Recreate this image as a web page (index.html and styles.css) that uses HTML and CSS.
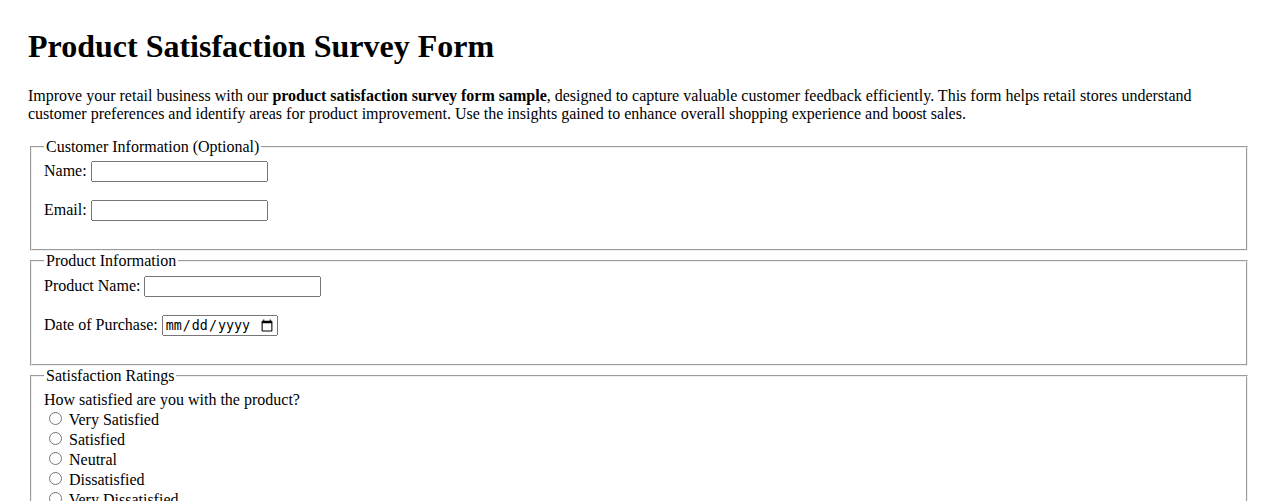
FILE: index.html
```html
<!DOCTYPE html>
<html lang="en">
<head>
<meta charset="utf-8">
<title>Product Satisfaction Survey Form</title>
<link rel="stylesheet" href="styles.css">
</head>
<body>
<div class="page">
  <h1 class="title">Product Satisfaction Survey Form</h1>
  <p class="intro">Improve your retail business with our <strong>product satisfaction survey form sample</strong>, designed to capture valuable customer feedback efficiently. This form helps retail stores understand customer preferences and identify areas for product improvement. Use the insights gained to enhance overall shopping experience and boost sales.</p>
  <form class="survey">
    <fieldset class="section">
      <legend>Customer Information (Optional)</legend>
      <div class="field">
        <label for="name">Name:</label>
        <input class="text-input" type="text" id="name" name="name">
      </div>
      <div class="field">
        <label for="email">Email:</label>
        <input class="text-input" type="email" id="email" name="email">
      </div>
    </fieldset>
    <fieldset class="section">
      <legend>Product Information</legend>
      <div class="field">
        <label for="product">Product Name:</label>
        <input class="text-input" type="text" id="product" name="product">
      </div>
      <div class="field">
        <label for="date">Date of Purchase:</label>
        <input class="date-input" type="date" id="date" name="date">
      </div>
    </fieldset>
    <fieldset class="section">
      <legend>Satisfaction Ratings</legend>
      <div class="question">How satisfied are you with the product?</div>
      <div class="option"><input type="radio" id="r1" name="sat" value="5"> <label for="r1">Very Satisfied</label></div>
      <div class="option"><input type="radio" id="r2" name="sat" value="4"> <label for="r2">Satisfied</label></div>
      <div class="option"><input type="radio" id="r3" name="sat" value="3"> <label for="r3">Neutral</label></div>
      <div class="option"><input type="radio" id="r4" name="sat" value="2"> <label for="r4">Dissatisfied</label></div>
      <div class="option"><input type="radio" id="r5" name="sat" value="1"> <label for="r5">Very Dissatisfied</label></div>
    </fieldset>
  </form>
</div>
</body>
</html>
```
FILE: styles.css
```css
html, body {
  margin: 0;
  padding: 0;
  background: #fff;
  color: #000;
}
body {
  font-family: "Liberation Serif", "Times New Roman", serif;
  font-size: 16px;
}
.page {
  padding: 7px 28px;
}
.title {
  font-size: 32px;
  font-weight: bold;
  margin: 21.44px 0;
}
.intro {
  margin: 16px 0 15px;
}
.section {
  margin: 0 2px 1px;
}
.field {
  margin-bottom: 18px;
}
.text-input {
  width: 177px;
  height: 21px;
  box-sizing: border-box;
}
.date-input {
  width: 116px;
  height: 21px;
  box-sizing: border-box;
}
```
